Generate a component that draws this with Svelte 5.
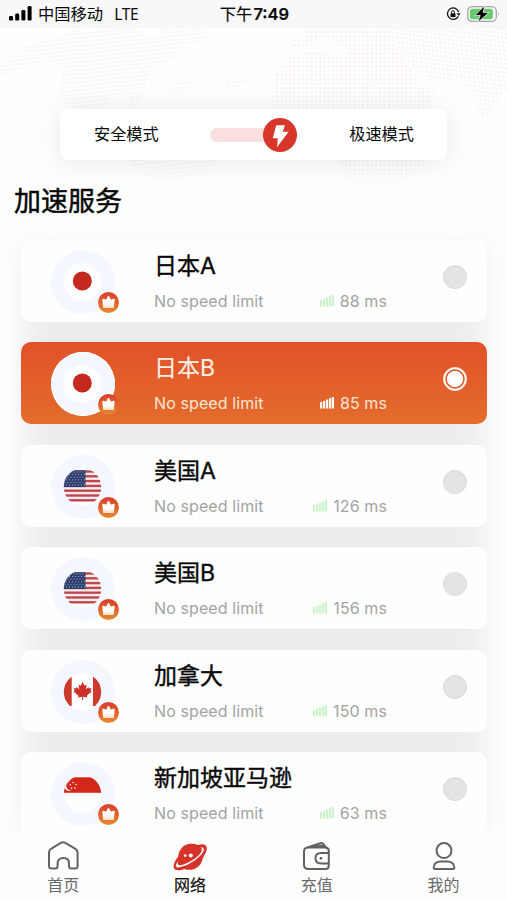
<script>
  const servers = [
    { name: '日本A', ping: 88, flag: 'jp' },
    { name: '日本B', ping: 85, flag: 'jp' },
    { name: '美国A', ping: 126, flag: 'us' },
    { name: '美国B', ping: 156, flag: 'us' },
    { name: '加拿大', ping: 150, flag: 'ca' },
    { name: '新加坡亚马逊', ping: 63, flag: 'sg' }
  ];
  const tabs = [
    { id: 'home', label: '首页' },
    { id: 'net', label: '网络' },
    { id: 'pay', label: '充值' },
    { id: 'me', label: '我的' }
  ];
  const stripes = [0, 1, 2, 3, 4, 5, 6];
  const stars = [];
  for (let r = 0; r < 6; r++) for (let c = 0; c < 7; c++) stars.push([c * 3 + (r % 2 ? 2.5 : 1), r * 2.6 + 1.6]);
  let selected = $state(1);
</script>

<div class="screen">
  <header class="status">
    <div class="side">
      <svg class="cell" width="23" height="15" viewBox="0 0 23 15">
        <rect x="0" y="10" width="4" height="4.5" rx="1.3" />
        <rect x="6.2" y="7.6" width="4" height="6.9" rx="1.3" />
        <rect x="12.4" y="4" width="4" height="10.5" rx="1.3" />
        <rect x="18.6" y="0" width="4" height="14.5" rx="1.3" />
      </svg>
      <span class="carrier">中国移动</span>
      <span class="lte">LTE</span>
    </div>
    <div class="time">下午<b>7:49</b></div>
    <div class="side right">
      <svg width="15" height="14" viewBox="0 0 15 14">
        <path d="M12.3 9.2A5.7 5.7 0 1 1 12.7 5.2" fill="none" stroke="#111" stroke-width="1.3" />
        <path d="M10.6 6.3h4l-1.8 2.8z" fill="#111" />
        <rect x="4.5" y="6.3" width="5" height="3.8" rx=".6" fill="#111" />
        <path d="M5.5 6.5V5.2a1.5 1.5 0 0 1 3 0v1.3" fill="none" stroke="#111" stroke-width="1" />
      </svg>
      <svg width="33" height="18" viewBox="0 0 33 18">
        <rect x=".7" y="1.7" width="28.6" height="14.6" rx="4.6" fill="#f8f8f8" stroke="#a3a5a3" stroke-width="1.3" />
        <rect x="2.9" y="3.8" width="23" height="10.4" rx="2.6" fill="#67cb6c" />
        <path d="M31 6.8q1.7 2.2 0 4.4z" fill="#a3a5a3" />
        <path d="M17.800.6L7.800 10.400h5.400l-2.600 7L22 7.600h-5.800z" fill="#000" stroke="#f8f8f8" stroke-width=".8" />
      </svg>
    </div>
  </header>

  <main>
    <svg class="map" width="507" height="165" viewBox="0 28 507 165">
      <defs>
        <pattern id="dl" width="4" height="4" patternUnits="userSpaceOnUse" patternTransform="rotate(-6) skewX(-18)">
          <circle cx="2" cy="2" r=".85" fill="#f8e8e5" />
        </pattern>
        <pattern id="dr" width="4.3" height="4.3" patternUnits="userSpaceOnUse">
          <circle cx="2" cy="2" r=".95" fill="#f6e7e5" />
        </pattern>
        <pattern id="de" width="4.3" height="4.3" patternUnits="userSpaceOnUse" patternTransform="rotate(7) skewX(14)">
          <circle cx="2" cy="2" r=".9" fill="#f7e8e6" />
        </pattern>
        <linearGradient id="fade" x2="0" y2="1"><stop offset=".8" stop-color="#fff" /><stop offset="1" stop-color="#fff" stop-opacity=".1" /></linearGradient>
        <mask id="m"><rect y="28" width="507" height="165" fill="url(#fade)" /></mask>
      </defs>
      <g mask="url(#m)">
        <path d="M0 65L22 48 75 30 135 28 150 38 160 35V28H208V38L178 50 173 60 155 64 145 86 118 94 100 110H70L60 92 64 68 50 60 18 70 0 78z" fill="url(#dl)" />
        <path d="M172 84l20-5v10l-20 4zM132 92h10v16h-14zM226 82l24-4v6l-24 4zM128 160h90l-12 16-48 6-20-9z" fill="url(#dl)" />
        <path d="M305 28H385L420 85 437 91 426 110H273V92L276 73 292 55 318 50 342 58 350 50 320 36 312 48H291V40H305zM338 160h88l-10 13-20 13-40 3-10-17z" fill="url(#dr)" />
        <path d="M385 28H507V88L484 120 475 110 480 98 458 78 430 80 412 66z" fill="url(#de)" />
      </g>
    </svg>

    <section class="mode">
      <span>安全模式</span>
      <div class="switch">
        <svg width="34" height="34" viewBox="0 0 34 34">
          <circle cx="17" cy="17" r="17" fill="#d9362b" />
          <path d="M13.200 7.200H22L19.700 13.800H25.600L14 29.200 14.800 20.300H9.800z" fill="#fff" />
        </svg>
      </div>
      <span>极速模式</span>
    </section>

    <h1>加速服务</h1>

    <div class="list">
      {#each servers as s, i}
        <button class="card" class:on={selected === i} onclick={() => (selected = i)}>
          <span class="avatar">
            <svg width="64" height="64" viewBox="0 0 64 64">
              <defs><clipPath id="c{i}"><circle cx="31.500" cy="32" r="18.700" /></clipPath></defs>
              <circle cx="31.500" cy="32" r="18.700" fill="#fefefe" />
              <g clip-path="url(#c{i})">
                {#if s.flag === 'jp'}
                  <circle cx="31.300" cy="31" r="9.500" fill="#c5281c" />
                {:else if s.flag === 'us'}
                  <rect x="12" y="15.300" width="39" height="31.200" fill="#f6eeee" />
                  {#each stripes as n}<rect x="12" y={15.3 + n * 4.8} width="39" height="2.400" fill="#be4850" />{/each}
                  <rect x="12" y="15.300" width="22.500" height="16.800" fill="#2e406f" />
                  {#each stars as [x, y]}<circle cx={13 + x} cy={15.3 + y} r=".55" fill="#a9b3cb" />{/each}
                {:else if s.flag === 'ca'}
                  <rect x="12" y="17" width="8.700" height="29" fill="#cc392d" />
                  <rect x="42" y="17" width="9" height="29" fill="#cc392d" />
                  <path d="M31.500 22l2 3.700 2.200-1-.9 4.700 2.600-2.400.8 1.500 2.300-.4-.9 2.600 1.100.9-5 4.200.5 1.600-4.200-.6.100 3.400h-1l.1-3.400-4.200.6.500-1.600-5-4.200 1.100-.9-.9-2.600 2.300.4.800-1.500 2.600 2.400-.9-4.700 2.200 1z" fill="#cc2f27" />
                {:else}
                  <rect x="12" y="15.300" width="39" height="15.500" fill="#d3271c" />
                  <path d="M19.500 19a5 5 0 1 0 1 9.400a4.700 4.700 0 0 1-1-9.400z" fill="#fff" />
                  <g fill="#fff"><circle cx="22" cy="20.500" r=".8" /><circle cx="25" cy="22.500" r=".8" /><circle cx="24" cy="26" r=".8" /><circle cx="20.500" cy="26.300" r=".8" /><circle cx="19.300" cy="22.800" r=".8" /></g>
                {/if}
              </g>
            </svg>
            <svg class="crown" width="21" height="21" viewBox="0 0 21 21">
              <defs>
                <linearGradient id="g{i}" x2="0" y2="1"><stop stop-color="#d93c2b" /><stop offset="1" stop-color="#e78a30" /></linearGradient>
                <linearGradient id="w{i}" x2="0" y2="1"><stop offset=".6" stop-color="#fff" /><stop offset="1" stop-color="#fbe0c8" /></linearGradient>
              </defs>
              <circle cx="10.500" cy="10.500" r="10.500" fill="url(#g{i})" />
              <path d="M5 7.400L8.600 8.400 10.500 4.600 12.400 8.400 16 7.400 15.200 15.400H5.800z" fill="url(#w{i})" stroke="url(#w{i})" stroke-width="1.400" stroke-linejoin="round" />
            </svg>
          </span>
          <span class="body">
            <span class="name">{s.name}</span>
            <span class="meta">
              <span>No speed limit</span>
              <span class="ping">
                <svg width="14" height="12" viewBox="0 0 14 12">
                  <rect x="0" y="5" width="2.200" height="6.500" /><rect x="3" y="3.800" width="2.200" height="7.700" /><rect x="6" y="2.500" width="2.200" height="9" /><rect x="9" y="1.200" width="2.200" height="10.300" /><rect x="11.800" y="0" width="2.200" height="11.500" />
                </svg>
                <span>{s.ping} ms</span>
              </span>
            </span>
          </span>
          <span class="radio"></span>
        </button>
      {/each}
    </div>
  </main>

  <nav>
    {#each tabs as t}
      <a href="#{t.id}" class:active={t.id === 'net'}>
        <svg width="36" height="32" viewBox="0 0 36 32" fill="none" stroke="#626262" stroke-width="2" stroke-linejoin="round" stroke-linecap="round">
          {#if t.id === 'home'}
            <path d="M16.200 1.700Q18 .7 19.800 1.700L30.500 7.800Q32.600 9.200 32.600 11.500V25Q32.600 27.500 30 27.500H26.500Q24 27.500 24 25V22.500Q24 17.100 18.300 17.100T12.600 22.500V25Q12.600 27.500 10.100 27.500H6.500Q4 27.500 4 25V11.500Q4 9.200 6 7.800Z" />
          {:else if t.id === 'net'}
            <g stroke="none">
              <path d="M9 8C12 3 20 1.500 26 4C33 1.800 36.500 5 34 11C31.800 15.700 30.600 17.500 30 20C27.500 27.500 19.500 30.500 12.500 28C6 30.500-.5 29.500 2.200 22.500C3.200 19.500 5 17 6.200 15.500C6.400 12.500 7.200 10.500 9 8z" fill="#d8332b" />
              <path d="M5.700 20.500C3.800 23.500 3.300 26.100 5.500 26.500C11.500 27 27.500 18.500 31.200 10.600C32.800 7.600 31.500 5.900 28.500 6.500C31.300 7.600 29.500 11.300 27.200 13.700C22 19.200 14.500 22.700 8.600 24.300C6.200 24.700 5.200 23.200 5.700 20.500z" fill="#fff" />
              <circle cx="13.200" cy="14.600" r="1.300" fill="#fff" />
              <circle cx="18.800" cy="14.600" r="2" fill="#fff" />
            </g>
          {:else if t.id === 'pay'}
            <path d="M9.500 6.500H26Q29.800 6.500 29.800 10V24.500Q29.800 28 26.500 28H9.500Q5 28 5 24V10.500Q5 6.500 9.500 6.500zM7.500 6.800L21.500 2.200Q23.500 1.700 24.800 3.300L28 7.500M14 5.900L24.500 4.500M29.500 12H22Q16.500 12 16.500 17.200T22 22.500H29.500" />
            <circle cx="22" cy="17.300" r="1.300" fill="#555" stroke="none" />
          {:else}
            <circle cx="18" cy="9.600" r="7.500" />
            <path d="M15 20.500H21Q28 20.500 28.300 26.500Q28.400 28 27 28H9Q7.600 28 7.700 26.500Q8 20.500 15 20.500z" />
          {/if}
        </svg>
        <span>{t.label}</span>
      </a>
    {/each}
  </nav>
</div>

<style>
  .screen {
    width: 507px;
    height: 900px;
    display: flex;
    flex-direction: column;
    overflow: hidden;
    background: #fefefe;
    color: #090909;
    font-family: Inter, 'Noto Sans CJK SC', sans-serif;
  }
  .status {
    height: 28px;
    flex: none;
    display: flex;
    align-items: center;
    background: #f8f8f8;
    font-size: 16.300px;
    line-height: 28px;
  }
  .side { flex: 1; display: flex; align-items: center; padding-left: 9px; }
  .cell { fill: #000; margin-top: -1px; }
  .carrier { margin-left: 6px; }
  .lte { margin-left: 11px; font-family: 'Noto Sans', sans-serif; font-size: 15.500px; letter-spacing: -.3px; }
  .time { -webkit-text-stroke: .2px #090909; }
  .time b { font-weight: 600; font-size: 16.500px; margin-left: 1px; }
  .right { justify-content: flex-end; padding: 0 7px 0 0; gap: 6px; }
  main {
    position: relative;
    flex: 1;
    min-height: 0;
    overflow: hidden;
    display: flex;
    flex-direction: column;
  }
  .map { position: absolute; left: 0; top: 0; }
  .mode {
    position: relative;
    flex: none;
    box-sizing: border-box;
    width: 387px;
    height: 51px;
    margin: 81px 0 0 60px;
    padding: 0 33px 0 34px;
    display: flex;
    align-items: center;
    justify-content: space-between;
    background: #fff;
    border-radius: 8px;
    box-shadow: 0 2px 28px rgba(0, 0, 0, .09);
    font-size: 16.200px;
  }
  .mode span { margin-top: -4px; }
  .switch {
    width: 87px;
    height: 14px;
    margin-right: 1px;
    display: flex;
    align-items: center;
    justify-content: flex-end;
    background: #fbe0e1;
    border-radius: 7px;
  }
  h1 {
    flex: none;
    position: relative;
    margin: 22px 0 0 14px;
    font-size: 27px;
    line-height: 40px;
    font-weight: 400;
    -webkit-text-stroke: .5px #090909;
  }
  .list {
    position: relative;
    flex: none;
    display: flex;
    flex-direction: column;
    gap: 20.500px;
    margin: 17.600px 20px 0 21px;
  }
  .list::before {
    content: '';
    position: absolute;
    inset: 6px 2px 0 2px;
    background: #ededed;
    filter: blur(13px);
  }
  .card {
    position: relative;
    display: flex;
    align-items: flex-start;
    width: 466px;
    height: 82px;
    padding: 0;
    border: 0;
    border-radius: 10px;
    background: #fefefe;
    color: #090909;
    font: inherit;
    text-align: left;
  }
  .avatar {
    position: relative;
    width: 64px;
    height: 64px;
    margin: 10px 0 0 29.500px;
    border-radius: 50%;
    background: #f4f7fe;
    flex: none;
  }
  .avatar > svg { display: block; }
  .on .avatar { box-shadow: inset 0 0 0 1.500px #fff; }
  .avatar .crown { position: absolute; left: 47px; top: 42px; }
  .body { width: 233px; margin-left: 39.500px; display: flex; flex-direction: column; flex: none; }
  .name {
    font-size: 23px;
    line-height: 34px;
    margin-top: 9px;
    white-space: nowrap;
    -webkit-text-stroke: .4px currentColor;
  }
  .meta {
    display: flex;
    justify-content: space-between;
    margin-top: 8px;
    font-size: 16px;
    line-height: 20px;
    letter-spacing: .1px;
    color: #a3a3a3;
  }
  .ping { display: flex; align-items: center; gap: 6px; fill: #cdf3cb; }
  .radio {
    box-sizing: border-box;
    width: 24px;
    height: 24px;
    margin: 25px 0 0 56px;
    border-radius: 50%;
    background: #e4e4e4;
    border: 1px solid #dbdbdb;
  }
  .on { background: linear-gradient(#e15228, #e36c2c); color: #fff1e8; }
  .on .name { -webkit-text-stroke-width: .1px; }
  .on .meta { color: #fde5d8; }
  .on .ping { fill: #fff; }
  .on .radio { background: radial-gradient(circle, #fff 7.700px, #e15d2c 8.400px, #e15d2c 9.300px, #fff 10px); border-color: #fff0e7; }
  nav {
    position: relative;
    flex: none;
    height: 67px;
    display: flex;
    background: #fefefe;
  }
  nav a {
    flex: 1;
    display: flex;
    flex-direction: column;
    align-items: center;
    padding-top: 8px;
    color: #696969;
    font-size: 16px;
    line-height: 24px;
    text-decoration: none;
  }
  .active { color: #111; -webkit-text-stroke: .2px #111; }
</style>
